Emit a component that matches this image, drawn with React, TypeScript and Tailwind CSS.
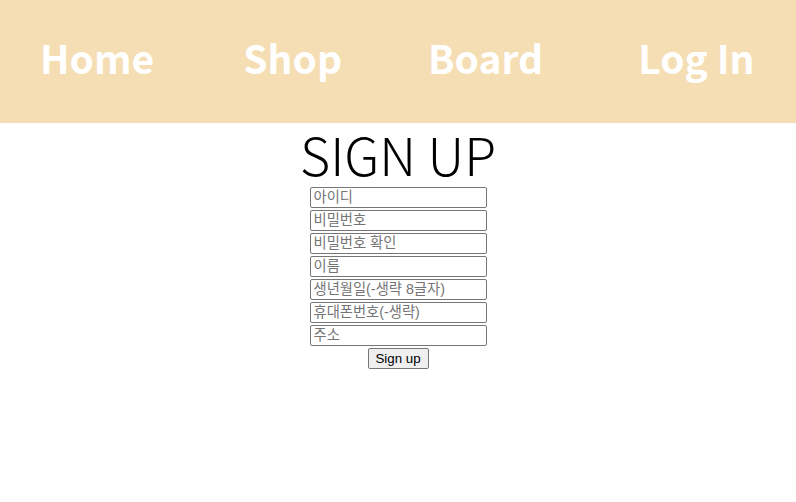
const navItems = [
    { label: 'Home', cls: '' },
    { label: 'Shop', cls: 'ml-[89px]' },
    { label: 'Board', cls: 'ml-[86px]' },
    { label: 'Log In', cls: 'ml-[95px]' },
];

const fields = [
    '아이디',
    '비밀번호',
    '비밀번호 확인',
    '이름',
    '생년월일(-생략 8글자)',
    '휴대폰번호(-생략)',
    '주소',
];

const App = () => {
    return (
        <div className="min-h-[502px] bg-white">
            <nav className="h-[123px] pb-[8px] bg-[#f5deb3] flex items-center pl-[40px] font-['Noto_Sans_CJK_KR',sans-serif]">
                {navItems.map((item) => (
                    <a key={item.label} href="#" className={`text-white font-bold text-[39px] leading-none ${item.cls}`}>
                        {item.label}
                    </a>
                ))}
            </nav>

            <div className="flex flex-col items-center">
                <h1 className="mt-[1px] text-[52px] leading-[60px] font-light text-black font-['Noto_Sans_CJK_KR',sans-serif]">
                    SIGN UP
                </h1>
                <form className="flex flex-col items-center gap-[2px] mt-[3px]" onSubmit={(e) => e.preventDefault()}>
                    {fields.map((f) => (
                        <input
                            key={f}
                            placeholder={f}
                            className="w-[177px] h-[21px] px-[3px] border border-[#767676] rounded-[2px] text-[14.3px] font-['Liberation_Sans','Noto_Sans_CJK_KR',sans-serif] placeholder:text-[#757575] outline-none"
                        />
                    ))}
                    <button
                        type="submit"
                        className="w-[61px] h-[21px] bg-[#efefef] border border-[#767676] rounded-[2px] text-[13.33px] text-black font-['Liberation_Sans',sans-serif] leading-none"
                    >
                        Sign up
                    </button>
                </form>
            </div>
        </div>
    );
};

export default App;
